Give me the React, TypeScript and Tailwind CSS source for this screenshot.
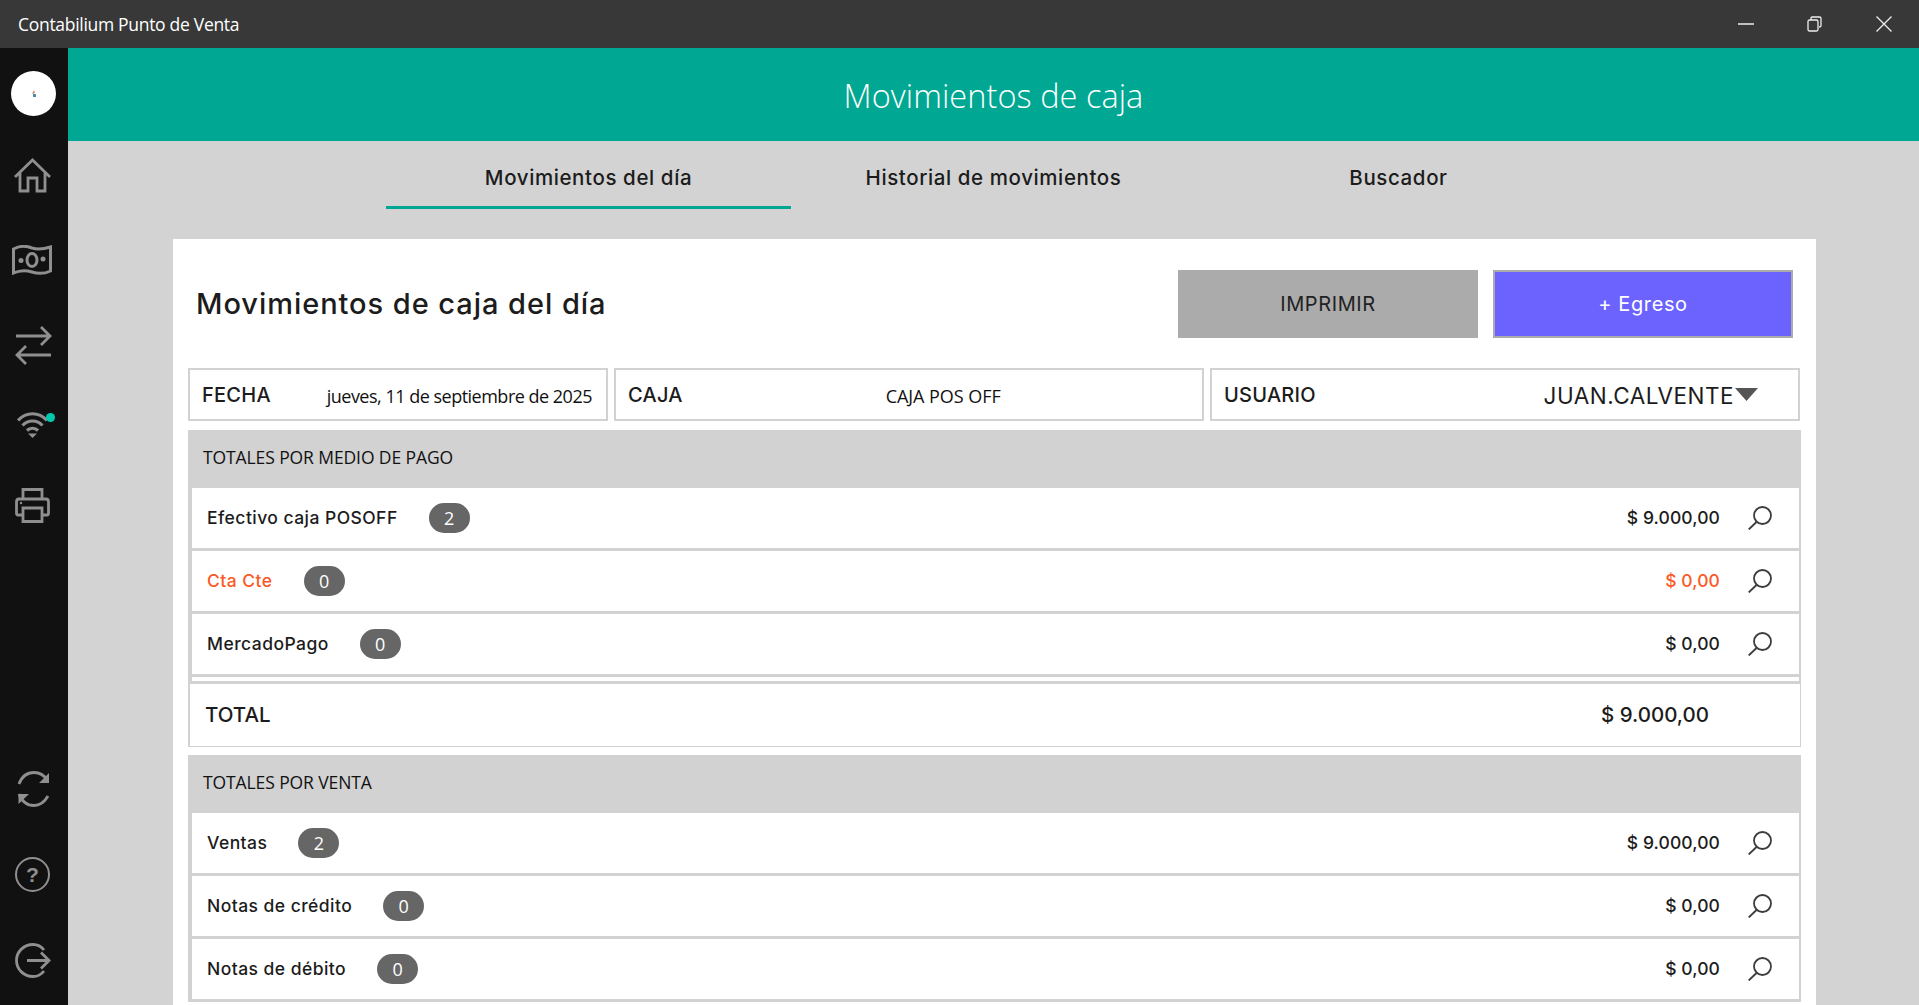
const work = "font-['Inter','Liberation_Sans',sans-serif]"
const segoe = "font-['Open_Sans','Noto_Sans',sans-serif]"

function SideIcon({ w, h, className, children }: { w: number; h: number; className?: string; children: React.ReactNode }) {
  return (
    <svg width={w} height={h} viewBox={`0 0 ${w} ${h}`} fill="none" stroke="#8f8f8f" strokeWidth="2.8" className={className}>
      {children}
    </svg>
  )
}

function Logo() {
  return (
    <div className="mt-[23px] ml-[11px] flex h-[45px] w-[45px] items-center justify-center rounded-full bg-white">
      <svg width="6" height="7" viewBox="0 0 6 7">
        <path d="M3 0 L4 3 L1 4Z" fill="#c98a70" />
        <path d="M2 4 H5 V7 H2Z" fill="#4a8fa8" />
      </svg>
    </div>
  )
}

function Sidebar() {
  return (
    <aside className="flex w-[68px] shrink-0 flex-col bg-[#111111]">
      <Logo />
      <SideIcon w={37} h={35} className="mt-[42px] ml-[14px]">
        <path d="M1 19 L18.5 2 L36 19 M6 15 V33 H14 V20 H23 V33 H31 V15" />
      </SideIcon>
      <SideIcon w={40} h={30} className="mt-[52px] ml-[12px]">
        <path d="M1.5 4 C9 0 15 1 20 3 C26 5 32 4 38.5 2 V26 C32 29 26 29 20 27 C14 25 8 25 1.5 28Z" strokeWidth="3" />
        <ellipse cx="20" cy="15" rx="5" ry="6.500" strokeWidth="3" />
        <circle cx="9" cy="15.500" r="2.500" fill="#8f8f8f" stroke="none" />
        <circle cx="31" cy="14" r="2.500" fill="#8f8f8f" stroke="none" />
      </SideIcon>
      <SideIcon w={37} h={39} className="mt-[51px] ml-[15px]">
        <path d="M1 10 H35 M26 1 L35 10 L26 19 M36 29 H2 M11 20 L2 29 L11 38" />
      </SideIcon>
      <div className="relative mt-[46px] ml-[17px] h-[27px] w-[31px]">
        <SideIcon w={31} h={27}>
          <path d="M1 9.500 C9 0.500 22 0.500 30 9.500 M5.500 14.500 C11 8.500 20 8.500 25.500 14.500 M10 19.500 C13 16.500 18 16.500 21 19.500" strokeWidth="3.200" />
          <path d="M15.500 27 L11 22.500 H20Z" fill="#8f8f8f" stroke="none" />
        </SideIcon>
        <span className="absolute top-[2px] left-[29px] h-[9px] w-[9px] rounded-full bg-[#00c9b0]" />
      </div>
      <SideIcon w={35} h={35} className="mt-[50px] ml-[15px]">
        <path d="M8 11 V1.500 H27 V11 M8 27 H3 Q1.500 27 1.500 25 V14 Q1.500 11 4 11 H31 Q33.500 11 33.500 14 V25 Q33.500 27 32 27 H27" />
        <path d="M8 20 H27 V33.500 H8Z" />
        <circle cx="6" cy="15" r="1.200" fill="#8f8f8f" stroke="none" />
      </SideIcon>
      <div className="flex-1" />
      <SideIcon w={33} h={36} className="ml-[17px]">
        <path d="M2 13 C5 5 11 1.500 17 1.500 C22 1.500 27 4 30 9 M2 23 C5 31 11 34.500 17 34.500 C22 34.500 27 32 31 25" />
        <path d="M32 2 V12 H22Z M1.500 33 V23 H12Z" fill="#8f8f8f" stroke="none" />
      </SideIcon>
      <div className="mt-[50px] ml-[15px] flex h-[35px] w-[35px] items-center justify-center rounded-full border-[2.8px] border-[#8f8f8f] font-['Liberation_Sans',sans-serif] text-[21px] font-bold text-[#8f8f8f]">
        ?
      </div>
      <SideIcon w={36} h={35} className="mt-[51px] mb-[27px] ml-[15px]">
        <path d="M29 7 C26 3 22 1.500 18 1.500 C9 1.500 1.500 8.500 1.500 17.500 C1.500 26.500 9 33.500 18 33.500 C22 33.500 26 32 29 28" />
        <path d="M12 17.500 H34 M26 9.500 L34 17.500 L26 25.500" />
      </SideIcon>
    </aside>
  )
}

function SearchIcon() {
  return (
    <svg width="24" height="24" viewBox="0 0 24 24" fill="none" stroke="#3c3c3c" strokeWidth="1.800" className="shrink-0">
      <circle cx="14.500" cy="9.500" r="8.500" />
      <path d="M8.500 16 L0.700 23.500" />
    </svg>
  )
}

function MoneyRow({ label, count, amount, orange }: { label: string; count: number; amount: string; orange?: boolean }) {
  return (
    <div className="flex h-[63px] border-b-[3px] border-b-[#d2d2d2] bg-white pr-[27px] pl-[15px]">
      <div className={`flex flex-1 items-center ${work} text-[17.5px] font-[450] ${orange ? 'text-[#fb5a27]' : 'text-[#1c1c1c]'}`}>
        <span className="tracking-[0.45px]">{label}</span>
        <span className={`ml-[31px] flex h-[30px] w-[41px] items-center justify-center rounded-full bg-[#666666] ${segoe} text-[18px] font-normal text-white`}>
          {count}
        </span>
        <span className="ml-auto tracking-[0.1px]">{amount}</span>
      </div>
      <div className="ml-[28px] flex items-center">
        <SearchIcon />
      </div>
    </div>
  )
}

function SectionTitle({ title }: { title: string }) {
  return (
    <div className={`flex h-[58px] items-center bg-[#d2d2d2] pb-[3px] pl-[15px] ${segoe} text-[17.5px] tracking-[-0.1px] text-[#111]`}>
      {title}
    </div>
  )
}

function InfoBox({ label, className, children }: { label: string; className: string; children: React.ReactNode }) {
  return (
    <div className={`flex h-[53px] items-center border-2 border-[#d2d2d2] pl-[12px] ${className}`}>
      <span className={`${work} text-[20px] font-[450] tracking-[0.25px] text-[#1c1c1c]`}>{label}</span>
      {children}
    </div>
  )
}

function Card() {
  return (
    <div className="mt-[30px] mr-[103px] ml-[105px] flex-1 bg-white pl-[15px]">
      <div className="flex h-[129px] items-start pt-[31px] pr-[23px]">
        <h1 className={`mt-[14px] ml-[8px] flex-1 ${work} text-[29px] leading-[40px] font-[450] tracking-[0.95px] text-[#1c1c1c]`}>
          Movimientos de caja del día
        </h1>
        <button className={`h-[68px] w-[300px] bg-[#ababab] ${work} text-[20px] tracking-[0.6px] text-[#222]`}>IMPRIMIR</button>
        <button className={`ml-[15px] h-[68px] w-[300px] border-2 border-[#ababab] bg-[#6c63ff] ${work} text-[20px] tracking-[0.6px] text-white`}>
          + Egreso
        </button>
      </div>
      <div className="mr-[16px] flex gap-[6px]">
        <InfoBox label="FECHA" className="w-[420px]">
          <span className={`ml-auto pt-[3px] pr-[14px] ${segoe} text-[18px] tracking-[-0.5px] text-[#111]`}>
            jueves, 11 de septiembre de 2025
          </span>
        </InfoBox>
        <InfoBox label="CAJA" className="w-[590px]">
          <span className={`ml-[203px] pt-[3px] ${segoe} text-[18px] tracking-[-0.05px] text-[#111]`}>CAJA POS OFF</span>
        </InfoBox>
        <InfoBox label="USUARIO" className="flex-1">
          <span className={`ml-auto pt-[3px] ${work} text-[22.5px] tracking-[0.5px] text-[#1c1c1c]`}>JUAN.CALVENTE</span>
          <svg width="23" height="13" viewBox="0 0 23 13" className="mr-[40px] ml-[1px]">
            <path d="M0 0 H23 L11.500 13Z" fill="#555" />
          </svg>
        </InfoBox>
      </div>
      <div className="mt-[9px] mr-[15px]">
        <SectionTitle title="TOTALES POR MEDIO DE PAGO" />
        <div className="border-r-2 border-l-4 border-x-[#d2d2d2]">
          <MoneyRow label="Efectivo caja POSOFF" count={2} amount="$ 9.000,00" />
          <MoneyRow label="Cta Cte" count={0} amount="$ 0,00" orange />
          <MoneyRow label="MercadoPago" count={0} amount="$ 0,00" />
          <div className="h-[7px] border-b-[3px] border-b-[#d2d2d2] bg-white" />
        </div>
        <div className={`flex h-[63px] items-center border-r border-b border-l-2 border-[#d2d2d2] pr-[91px] pl-[15px] ${work} text-[20.5px] font-[450] text-[#1c1c1c]`}>
          <span>TOTAL</span>
          <span className="ml-auto">$ 9.000,00</span>
        </div>
        <div className="h-[8px]" />
        <SectionTitle title="TOTALES POR VENTA" />
        <div className="border-r-2 border-l-4 border-x-[#d2d2d2]">
          <MoneyRow label="Ventas" count={2} amount="$ 9.000,00" />
          <MoneyRow label="Notas de crédito" count={0} amount="$ 0,00" />
          <MoneyRow label="Notas de débito" count={0} amount="$ 0,00" />
        </div>
      </div>
    </div>
  )
}

export default function App() {
  const tabs = ['Movimientos del día', 'Historial de movimientos', 'Buscador']
  return (
    <div className="flex h-[1005px] w-[1919px] flex-col overflow-hidden bg-[#d3d3d3]">
      <div className={`flex h-[48px] shrink-0 items-center bg-[#383838] pl-[18px] ${segoe} text-[17.5px] tracking-[-0.3px] text-white`}>
        <span className="flex-1">Contabilium Punto de Venta</span>
        <svg width="16" height="2" viewBox="0 0 16 2"><path d="M0 1 H16" stroke="#eee" strokeWidth="1.500" /></svg>
        <svg width="15" height="16" viewBox="0 0 15 16" fill="none" stroke="#eee" strokeWidth="1.300" className="ml-[53px]">
          <rect x="1" y="4" width="10" height="11" rx="1.500" />
          <path d="M4 4 V2 Q4 1 5 1 H12.500 Q14 1 14 2.500 V10 Q14 11 12 11" />
        </svg>
        <svg width="16" height="16" viewBox="0 0 16 16" stroke="#eee" strokeWidth="1.300" className="mr-[27px] ml-[54px]">
          <path d="M0.500 0.500 L15.500 15.500 M15.500 0.500 L0.500 15.500" />
        </svg>
      </div>
      <div className="flex min-h-0 flex-1">
        <Sidebar />
        <main className="flex min-w-0 flex-1 flex-col">
          <header className={`flex h-[93px] shrink-0 items-center justify-center bg-[#00a792] pt-[3px] ${segoe} text-[32.5px] font-light tracking-[0.05px] text-white`}>
            Movimientos de caja
          </header>
          <nav className="flex h-[68px] shrink-0 justify-center">
            {tabs.map((t, i) => (
              <div
                key={t}
                className={`flex w-[405px] items-center justify-center border-b-[3px] pt-[9px] ${work} text-[20.5px] font-[450] tracking-[0.6px] text-[#1c1c1c] ${i === 0 ? 'border-b-[#00a792]' : 'border-b-transparent'}`}
              >
                {t}
              </div>
            ))}
          </nav>
          <Card />
        </main>
      </div>
    </div>
  )
}
